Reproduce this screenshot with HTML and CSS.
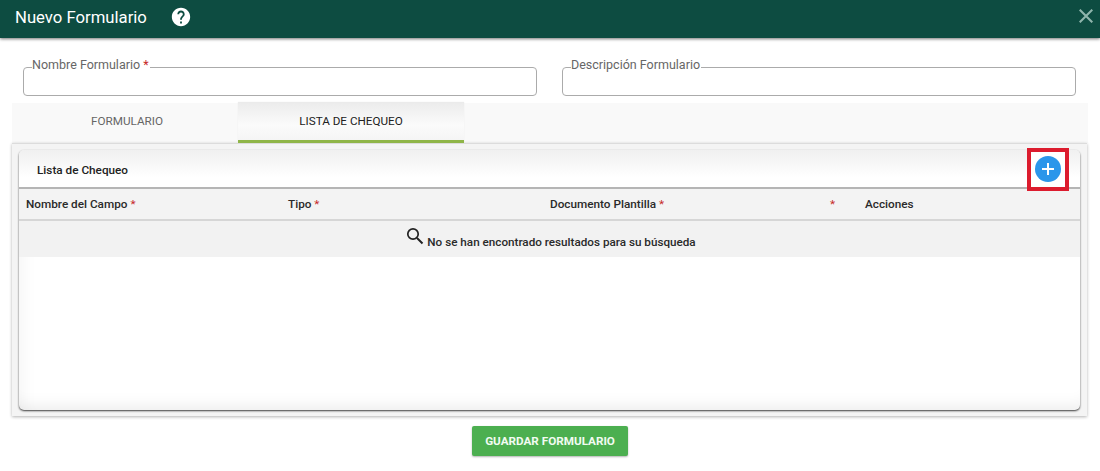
FILE: index.html
```html
<!DOCTYPE html>
<html lang="es">
<head>
<meta charset="utf-8">
<title>Nuevo Formulario</title>
<link rel="stylesheet" href="styles.css">
</head>
<body>
<header class="topbar">
  <h1 class="title">Nuevo Formulario</h1>
  <svg class="help" viewBox="0 0 24 24" width="22" height="22"><path fill="#fff" d="M12 2C6.48 2 2 6.48 2 12s4.48 10 10 10 10-4.48 10-10S17.52 2 12 2zm1 17h-2v-2h2v2zm2.07-7.75l-.9.92C13.45 12.9 13 13.5 13 15h-2v-.5c0-1.1.45-2.1 1.17-2.83l1.24-1.26c.37-.36.59-.86.59-1.41 0-1.1-.9-2-2-2s-2 .9-2 2H8c0-2.21 1.79-4 4-4s4 1.79 4 4c0 .88-.36 1.68-.93 2.25z"/></svg>
  <svg class="close" viewBox="0 0 14 14" width="14" height="14"><path d="M.7.7l12.6 12.6M13.3.7L.7 13.3" stroke="#8fb5ac" stroke-width="2.1" fill="none"/></svg>
</header>
<section class="fields">
  <fieldset class="field"><legend class="legend">Nombre Formulario <span class="req">*</span></legend></fieldset>
  <fieldset class="field"><legend class="legend">Descripción Formulario</legend></fieldset>
</section>
<main class="content">
  <nav class="tabs">
    <div class="tab tab-plain">FORMULARIO</div>
    <div class="tab tab-active">LISTA DE CHEQUEO</div>
  </nav>
  <section class="panel">
    <div class="card">
      <div class="card-head">
        <span class="card-title">Lista de Chequeo</span>
        <span class="add-mark">
          <span class="add-btn">
            <svg viewBox="0 0 12 12" width="12" height="12"><path d="M6 0v12M0 6h12" stroke="#fff" stroke-width="2" fill="none"/></svg>
          </span>
        </span>
      </div>
      <div class="cols">
        <div class="col col-a">Nombre del Campo <span class="req">*</span></div>
        <div class="col col-b">Tipo <span class="req">*</span></div>
        <div class="col col-c">Documento Plantilla <span class="req">*</span></div>
        <div class="col col-d"><span class="req">*</span></div>
        <div class="col col-e">Acciones</div>
      </div>
      <div class="empty">
        <svg class="search" viewBox="0 0 18 18" width="18" height="18"><circle cx="7" cy="7" r="5.2" stroke="#222" stroke-width="1.7" fill="none"/><path d="M11 11l5.5 5.5" stroke="#222" stroke-width="1.9" fill="none"/></svg>
        <span class="empty-text">No se han encontrado resultados para su búsqueda</span>
      </div>
    </div>
  </section>
</main>
<footer class="actions">
  <button class="save" type="button">GUARDAR FORMULARIO</button>
</footer>
</body>
</html>
```
FILE: styles.css
```css
* { box-sizing: border-box; }
html, body { margin: 0; padding: 0; }
body {
  width: 1100px;
  height: 471px;
  overflow: hidden;
  background: #fff;
  font-family: Roboto, "Liberation Sans", sans-serif;
  color: #212121;
}
.topbar {
  height: 38px;
  background: #0d4c41;
  box-shadow: 0 1px 3px rgba(0, 0, 0, .55);
  display: flex;
  align-items: center;
  padding: 0 7px 3px 15px;
  position: relative;
}
.title {
  margin: 0;
  font-size: 16.7px;
  font-weight: 400;
  color: #fff;
}
.help { margin: -1px 0 0 23px; }
.close { margin: -4px 0 0 auto; }
.fields {
  display: flex;
  gap: 25px;
  padding: 19px 24px 0 23px;
  height: 65px;
}
.field {
  flex: 1 1 0;
  height: 39px;
  margin: 0;
  padding: 0 0 0 8px;
  border: 1px solid #ababab;
  border-radius: 4px;
  min-width: 0;
}
.field + .field { flex: 1 1 0; }
.legend {
  padding: 0 1px 6px 0;
  margin: 0;
  font-size: 12.5px;
  line-height: 15px;
  color: #666;
}
.req { color: #c62828; font-weight: 400; }
.content { margin: 0 12px; }
.tabs {
  display: flex;
  height: 40px;
  background: #f9f9f9;
}
.tab {
  width: 226px;
  display: flex;
  align-items: center;
  justify-content: center;
  padding-bottom: 5px;
  font-size: 11.7px;
  color: #666;
}
.tab-plain { padding-left: 4px; }
.tab-active {
  padding-bottom: 2px;
  color: #212121;
  border-bottom: 3px solid #8fb548;
  background: linear-gradient(#ececec, #fbfbfb 60%, #f5f5f5);
  box-shadow: 0 -1px 1px rgba(0, 0, 0, .08);
}
.panel {
  height: 273px;
  width: 1075px;
  padding: 6px 7px 6px;
  background: #f4f4f4;
  border-top: 1px solid #dcdcdc;
  box-shadow: 0 1px 3px rgba(0, 0, 0, .3);
}
.card {
  height: 100%;
  background: #fff;
  border-radius: 5px;
  box-shadow: 0 1px 2px rgba(0, 0, 0, .75), inset 0 -18px 18px -16px rgba(0, 0, 0, .09), inset 18px 0 18px -16px rgba(0, 0, 0, .05);
}
.card-head {
  height: 39px;
  display: flex;
  align-items: center;
  justify-content: space-between;
  padding: 2px 11px 0 18px;
  background: linear-gradient(#f0f0f0, #fff 75%);
  border-bottom: 2px solid #b5b5b5;
  border-radius: 5px 5px 0 0;
}
.card-title { font-size: 11.75px; font-weight: 500; color: #222; margin-top: 1px; }
.add-mark {
  width: 42px;
  height: 43px;
  margin: -1px 0 0;
  border: 4px solid #dc1c2e;
  display: flex;
  align-items: center;
  justify-content: center;
  background: #fff;
}
.add-btn {
  width: 26px;
  height: 26px;
  border-radius: 50%;
  background: #2b96ea;
  display: flex;
  align-items: center;
  justify-content: center;
  margin-top: -1px;
}
.cols {
  display: flex;
  align-items: center;
  height: 32px;
  padding-bottom: 1px;
  background: #f3f3f3;
  border-bottom: 2px solid #d6d6d6;
  font-size: 11.75px;
  font-weight: 500;
  color: #2a2a2a;
}
.col { white-space: nowrap; }
.col-a { margin-left: 7px; width: 262px; }
.col-b { width: 262px; }
.col-c { width: 280px; }
.col-d { width: 35px; }
.empty {
  height: 36px;
  background: #f2f2f2;
  display: flex;
  align-items: center;
  justify-content: center;
  gap: 3px;
  padding-left: 3px;
}
.search { margin-top: -7px; }
.empty-text { font-size: 11.7px; font-weight: 500; color: #2a2a2a; margin-top: 6px; }
.actions {
  display: flex;
  justify-content: center;
  padding-top: 10px;
}
.save {
  width: 156px;
  height: 30px;
  border: 0;
  border-radius: 2px;
  background: #4caf50;
  color: #f2fbf2;
  font-family: inherit;
  font-size: 11.7px;
  font-weight: 700;
  box-shadow: 0 1px 2px rgba(0, 0, 0, .3);
  padding: 0;
}
```
